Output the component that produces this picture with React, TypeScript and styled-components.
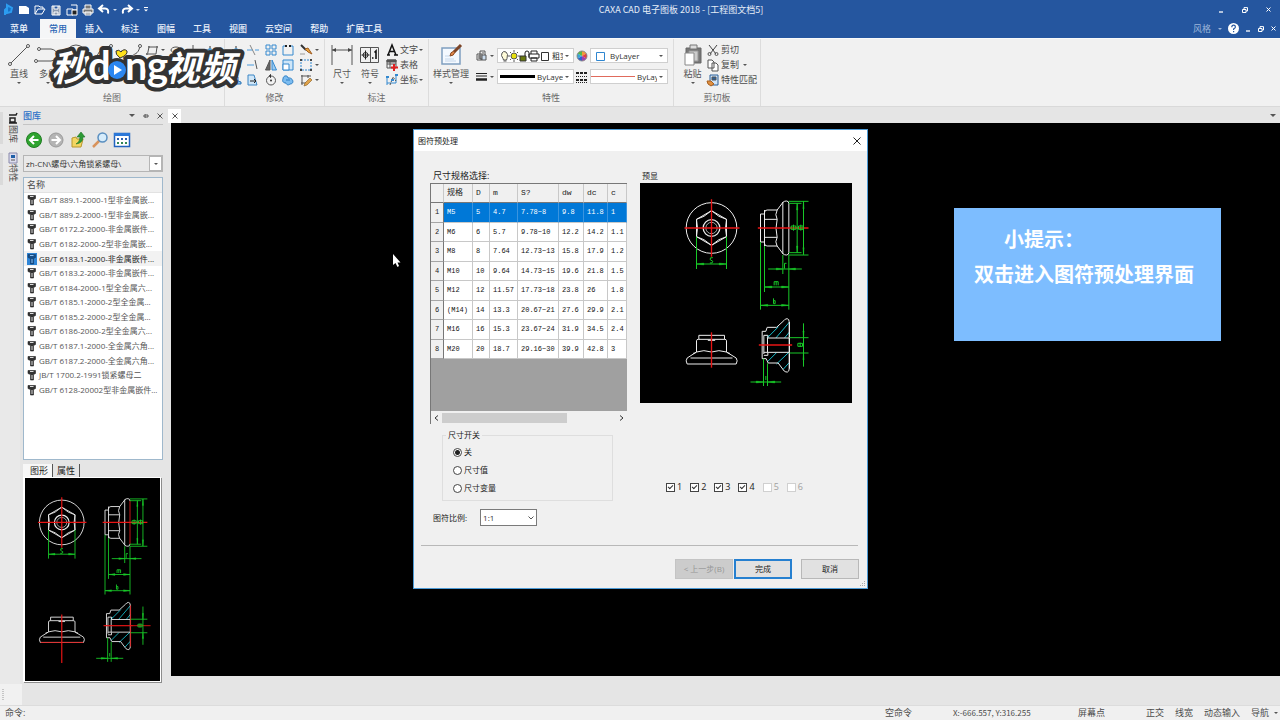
import React from "react";
import styled, { createGlobalStyle, css } from "styled-components";

const BLUE = "#25569f";
const INK = "#4c4c4c";
const UI_FONT = `"Open Sans", "Noto Sans CJK SC", sans-serif`;
const NARROW_FONT = `"Noto Sans CJK SC", sans-serif`;

const GlobalStyle = createGlobalStyle`
  *, *::before, *::after { box-sizing: border-box; }
  body { margin: 0; background: #e5e5e5; }
  body, button, input, select { font-family: ${UI_FONT}; font-size: 9px; line-height: 12px; color: ${INK}; }
  button { border: 0; padding: 0; background: none; white-space: nowrap; }
  svg { display: block; flex: none; overflow: visible; }
`;

const Page = styled.div`
  position: relative;
  display: flex;
  flex-direction: column;
  min-height: 100vh;
  overflow: hidden;
`;

/* ---------- title bar and menu ---------- */

const Banner = styled.header`
  background: ${BLUE};
  color: #fff;
  height: 38px;
`;

const TitleBar = styled.div`
  display: grid;
  grid-template-columns: 1fr auto 1fr;
  align-items: center;
  height: 19px;
`;

const QuickAccess = styled.div`
  display: flex;
  align-items: center;
  gap: 4px;
  padding-left: 2px;
  height: 15px;
`;

const Title = styled.h1`
  margin: 0;
  font-family: ${NARROW_FONT};
  font-size: 9px;
  font-weight: 400;
  line-height: 19px;
  color: #e6edf7;
  padding-left: 82px;
`;

const WindowButtons = styled.div<{ $gap: number }>`
  display: flex;
  align-items: center;
  justify-content: flex-end;
  gap: ${(p) => p.$gap}px;
  padding-right: ${(p) => (p.$gap > 10 ? 9 : 4)}px;
`;

const PlainButton = styled.button`
  display: flex;
  align-items: center;
  justify-content: center;
  gap: 3px;
  color: inherit;
`;

const MenuBar = styled.nav`
  display: flex;
  align-items: stretch;
  height: 19px;
  padding-left: 1px;
`;

const MenuTab = styled.button<{ $active?: boolean }>`
  padding: 0 9px;
  color: #e9f0fa;
  font-weight: 500;
  ${(p) =>
    p.$active &&
    css`
      margin-left: 3px;
      background: #f5f6f7;
      color: #2a66b5;
    `}
`;

const MenuRight = styled.div`
  display: flex;
  align-items: center;
  gap: 6px;
  margin-left: auto;
  color: #9db6da;
`;

/* ---------- ribbon ---------- */

const Ribbon = styled.section`
  display: flex;
  height: 69px;
  background: #f1f1f1;
  border-top: 1px solid #fafafa;
  border-bottom: 1px solid #d9d9d9;
`;

const Group = styled.div<{ $width: number }>`
  display: flex;
  flex-direction: column;
  flex: none;
  width: ${(p) => p.$width}px;
  padding-top: 3px;
  border-right: 1px solid #dcdcdc;
`;

const GroupBody = styled.div<{ $left: number }>`
  display: flex;
  height: 50px;
  padding-left: ${(p) => p.$left}px;
`;

const GroupLabel = styled.div`
  text-align: center;
  color: #6a6a6a;
`;

const BigButton = styled.button<{ $width: number }>`
  display: flex;
  flex-direction: column;
  align-items: center;
  width: ${(p) => p.$width}px;
  padding-top: 2px;
  gap: 2px;
  color: #555;
`;

const BigLabel = styled.span`
  height: 12px;
`;

const SmallGrid = styled.div<{ $columns: string }>`
  display: grid;
  grid-template-columns: ${(p) => p.$columns};
  grid-template-rows: repeat(3, 15px);
  align-items: center;
  justify-items: start;
`;

const TextTool = styled.button`
  display: flex;
  align-items: center;
  gap: 2px;
  height: 15px;
`;

const PropertyGrid = styled.div`
  display: grid;
  grid-template-columns: 25px 77px 16px 78px;
  grid-template-rows: 15px 15px;
  row-gap: 6px;
  align-items: center;
  justify-items: center;
  padding-top: 6px;
  height: 42px;
`;

const Combo = styled.label`
  display: flex;
  align-items: center;
  gap: 2px;
  width: 100%;
  height: 15px;
  padding: 0 4px 0 2px;
  overflow: hidden;
  background: #fff;
  border: 1px solid #cfcfcf;
`;

const ComboSelect = styled.select`
  flex: 1;
  min-width: 0;
  height: 13px;
  padding: 0;
  border: 0;
  appearance: none;
  background: none;
  color: #333;
  font-size: 8px;
  line-height: 13px;
`;

/* ---------- work area ---------- */

const Work = styled.div`
  display: flex;
  flex: 1;
  min-height: 577px;
`;

const Rail = styled.div`
  display: flex;
  flex-direction: column;
  gap: 9px;
  width: 20px;
  padding-top: 5px;
  background: #e9e9e9;
`;

const RailTab = styled.button`
  display: flex;
  flex-direction: column;
  align-items: center;
  gap: 1px;
  height: 32px;
  padding-left: 3px;
  border-left: 3px solid #dadada;
`;

const RailText = styled.span`
  writing-mode: vertical-rl;
  text-orientation: sideways;
  line-height: 12px;
`;

const Panel = styled.aside`
  display: flex;
  flex-direction: column;
  width: 148px;
  padding: 0 5px 2px 3px;
`;

const PanelHeader = styled.div`
  display: flex;
  align-items: center;
  gap: 8px;
  height: 18px;
  border-bottom: 1px solid #c4c4c4;
  color: #2a70c8;
`;

const PanelName = styled.h2`
  flex: 1;
  margin: 0;
  font-size: 9px;
  font-weight: 500;
`;

const PanelTools = styled.div`
  display: flex;
  align-items: center;
  gap: 6px;
  height: 30px;
  padding-left: 3px;
`;

const PathCombo = styled(Combo)`
  height: 17px;
  padding: 0 0 0 2px;
  background: #e9e9e9;
  border: 1px solid #b5b5b5;
  flex: none;
`;

const DropBox = styled.span`
  display: flex;
  align-items: center;
  justify-content: center;
  width: 13px;
  height: 15px;
  background: #fff;
  border: 1px solid #b5b5b5;
`;

const ListBox = styled.div`
  flex: 1;
  margin-top: 5px;
  background: #fff;
  border: 1px solid #9fb8cc;
`;

const ListHead = styled.div`
  height: 15px;
  padding-left: 3px;
  line-height: 14px;
  background: #f0f0f0;
  border-bottom: 1px solid #e2e2e2;
`;

const PartList = styled.ul`
  display: grid;
  grid-auto-rows: 1fr;
  height: 204px;
  margin: 0;
  padding: 0;
  list-style: none;
  font-size: 8px;
`;

const PartItem = styled.li<{ $selected: boolean }>`
  display: flex;
  align-items: center;
  gap: 2px;
  padding-left: 3px;
  white-space: nowrap;
  background: ${(p) => (p.$selected ? "#f2f2f2" : "transparent")};
  color: ${(p) => (p.$selected ? "#222" : "#555")};
`;

const PreviewTabs = styled.div`
  display: flex;
  margin-top: 4px;
`;

const PreviewTab = styled.button<{ $active?: boolean }>`
  height: 13px;
  padding: 0 4px 0 ${(p) => (p.$active ? 7 : 4)}px;
  color: #222;
  border-right: 1px solid #555;
  background: ${(p) => (p.$active ? "#f7f7f7" : "transparent")};
`;

const SidePreview = styled.div`
  height: 205px;
  margin-right: 2px;
  background: #000;
  border: 1px solid #fff;
  border-left-width: 2px;
  box-shadow: 1px 1px 0 #8c8c8c;
`;

const Main = styled.main`
  display: flex;
  flex-direction: column;
  flex: 1;
  min-width: 0;
  padding-bottom: 8px;
`;

const DocTabs = styled.div`
  display: flex;
  align-items: center;
  justify-content: space-between;
  height: 16px;
  padding-right: 4px;
`;

const DocTab = styled(PlainButton)`
  width: 13px;
  height: 14px;
  background: #fff;
  align-self: flex-end;
  color: #555;
`;

const Canvas = styled.div`
  position: relative;
  flex: 1;
  margin-left: 3px;
  background: #000;
`;

const Tip = styled.div`
  position: absolute;
  top: 85px;
  right: 59px;
  width: 267px;
  height: 133px;
  padding: 14px 20px;
  background: #7dbdff;
  color: #fff;
  font-size: 20px;
  font-weight: 700;
  line-height: 35px;
  white-space: nowrap;
`;

const TipHead = styled.p`
  margin: 0;
  padding-left: 30px;
`;

const TipText = styled.p`
  margin: 0;
`;

const Pointer = styled.svg`
  position: absolute;
  left: 221px;
  top: 131px;
`;

const CommandRow = styled.div`
  height: 22px;
  border-bottom: 1px solid #dcdcdc;
`;

const CommandGrip = styled.div`
  display: flex;
  align-items: center;
  width: 22px;
  height: 21px;
  padding-left: 2px;
  background: #f1f1f1;
`;

const StatusBar = styled.footer`
  display: flex;
  align-items: center;
  height: 14px;
  padding: 0 2px 0 5px;
  background: #f0f0f0;
  white-space: nowrap;
`;

const StatusCell = styled.span<{ $width?: number; $small?: boolean }>`
  flex: none;
  width: ${(p) => (p.$width ? `${p.$width}px` : "auto")};
  margin-left: ${(p) => (p.$width ? "0" : "auto")};
  ${(p) =>
    p.$small &&
    css`
      font-family: ${NARROW_FONT};
      font-size: 8px;
    `}
`;

const Watermark = styled.svg`
  position: absolute;
  left: 44px;
  top: 40px;
`;

/* ---------- dialog ---------- */

const Dialog = styled.section`
  position: absolute;
  top: 129px;
  left: calc(50% - 227px);
  width: 455px;
  height: 460px;
  display: flex;
  flex-direction: column;
  background: #f0f0f0;
  border: 1px solid #4d9bd6;
  color: #222;
`;

const DialogTitle = styled.div`
  display: flex;
  align-items: center;
  justify-content: space-between;
  height: 21px;
  padding: 0 6px 0 4px;
  background: #fff;
`;

const DialogName = styled.h2`
  margin: 0;
  font-size: 8px;
  font-weight: 400;
`;

const DialogBody = styled.div`
  display: flex;
  gap: 13px;
  height: 395px;
  margin: 0 9px 0 7px;
  padding: 17px 6px 0 9px;
  border-bottom: 1px solid #b8b8b8;
`;

const LeftColumn = styled.div`
  width: 197px;
`;

const RightColumn = styled.div`
  flex: 1;
`;

const Caption = styled.div`
  height: 15px;
  padding-left: 3px;
  line-height: 15px;
`;

const SmallCaption = styled(Caption)`
  padding-left: 2px;
  font-size: 8px;
`;

const GridBox = styled.div`
  height: 241px;
  display: flex;
  flex-direction: column;
  background: #a0a0a0;
  border-top: 1px solid #777;
  border-left: 1px solid #777;
`;

const SizeTable = styled.table`
  width: 196px;
  height: 175px;
  table-layout: fixed;
  border-collapse: separate;
  border-spacing: 0;
  font-family: "Liberation Mono", "Noto Sans CJK SC", monospace;
  font-size: 7px;
  line-height: 12px;
`;

const cell = css`
  height: 19px;
  padding: 0 0 0 3px;
  text-align: left;
  font-weight: 400;
  white-space: nowrap;
  overflow: hidden;
`;

const HeadCell = styled.th`
  ${cell}
  background: #f0f0f0;
  font-size: 8px;
  border-right: 1px solid #c8c8c8;
  border-bottom: 1px solid #777;
`;

const RowNumber = styled.th`
  ${cell}
  padding-left: 4px;
  background: #f0f0f0;
  border-right: 1px solid #777;
  border-bottom: 1px solid #a5a5a5;
`;

const DataCell = styled.td<{ $selected: boolean }>`
  ${cell}
  background: ${(p) => (p.$selected ? "#0078d7" : "#fff")};
  color: ${(p) => (p.$selected ? "#fff" : "#111")};
  border-right: 1px solid ${(p) => (p.$selected ? "#3a94df" : "#c8c8c8")};
  border-bottom: 1px solid #c8c8c8;
`;

const ScrollBar = styled.div`
  display: flex;
  align-items: center;
  justify-content: space-between;
  height: 13px;
  margin-top: auto;
  padding: 0 2px;
  background: #f0f0f0;
`;

const Thumb = styled.div`
  width: 125px;
  height: 10px;
  margin-right: auto;
  margin-left: 3px;
  background: #cdcdcd;
`;

const SwitchBox = styled.fieldset`
  display: flex;
  flex-direction: column;
  gap: 6px;
  width: 171px;
  height: 72px;
  margin: 5px 0 0 12px;
  padding: 5px 0 0 10px;
  border: 1px solid #dedede;
`;

const SwitchLegend = styled.legend`
  margin-left: -7px;
  padding: 0 2px;
  font-size: 8px;
`;

const Choice = styled.label<{ $dim?: boolean }>`
  display: flex;
  align-items: center;
  gap: 2px;
  height: 12px;
  font-size: ${(p) => (p.$dim === undefined ? 8 : 9)}px;
  color: ${(p) => (p.$dim ? "#a0a0a0" : "#222")};
`;

const Radio = styled.input`
  appearance: none;
  width: 9px;
  height: 9px;
  margin: 0;
  border: 1px solid #444;
  border-radius: 50%;
  background: #fff;
  &:checked {
    background: radial-gradient(circle, #222 0 2px, #fff 3px);
  }
`;

const CheckBoxes = styled.div`
  display: flex;
  gap: 8px;
  margin: 78px 0 0 26px;
`;

const CheckBox = styled.input`
  appearance: none;
  width: 9px;
  height: 9px;
  margin: 0;
  border: 1px solid #444;
  background: #fff;
  &:disabled {
    border-color: #d0d0d0;
  }
  &:checked::after {
    content: "";
    display: block;
    width: 5px;
    height: 3px;
    margin: 1px;
    border-left: 1px solid #333;
    border-bottom: 1px solid #333;
    transform: rotate(-45deg);
  }
`;

const ScaleRow = styled.label`
  display: flex;
  align-items: center;
  gap: 13px;
  margin-top: 8px;
  padding-left: 3px;
  font-size: 8px;
`;

const ScaleCombo = styled.span`
  display: flex;
  align-items: center;
  width: 57px;
  height: 17px;
  padding: 0 2px;
  background: #fff;
  border: 1px solid #7a7a7a;
`;

const DialogPreview = styled.div`
  height: 220px;
  background: #000;
`;

const DialogButtons = styled.div`
  display: flex;
  justify-content: flex-end;
  padding: 13px 8px 0 0;
`;

const DialogButton = styled.button<{ $primary?: boolean }>`
  width: 58px;
  height: 20px;
  margin-left: ${(p) => (p.$primary ? 1 : 9)}px;
  border: ${(p) => (p.$primary ? "2px solid #2680d0" : "1px solid #b8b8b8")};
  background: #e1e1e1;
  color: #222;
  font-size: 8px;
  &:disabled {
    background: #cccccc;
    color: #969696;
    border-color: #c4c4c4;
  }
`;

const SizeGrip = styled.svg`
  position: absolute;
  right: 1px;
  bottom: 1px;
`;

/* ---------- icons ---------- */

const Icon = ({ size = 12, height, box, children }: { size?: number; height?: number; box?: string; children: React.ReactNode }) => (
  <svg width={size} height={height ?? size} viewBox={box ?? `0 0 ${size} ${height ?? size}`} fill="none" stroke="#555" aria-hidden="true">
    {children}
  </svg>
);

const Down = ({ color = "#555", size = 4 }: { color?: string; size?: number }) => (
  <Icon size={size} height={Math.ceil(size / 2)} box="0 0 4 2">
    <path d="M0 0h4L2 2z" fill={color} stroke="none" />
  </Icon>
);

const CrossMark = ({ size = 6, color = "currentColor" }: { size?: number; color?: string }) => (
  <Icon size={size} box={`0 0 ${size} ${size}`}>
    <path d={`M.5 .5L${size - 0.5} ${size - 0.5}M${size - 0.5} .5L.5 ${size - 0.5}`} stroke={color} />
  </Icon>
);

const WindowIcons = () => (
  <>
    <PlainButton aria-label="最小化"><Icon size={6}><path d="M1 5h4" stroke="#fff" strokeWidth="1.300" /></Icon></PlainButton>
    <PlainButton aria-label="还原">
      <Icon size={6}><path d="M.5 2.500h3.500v3h-3.500zM2 2V.6h3.500V4H4" stroke="#fff" /></Icon>
    </PlainButton>
    <PlainButton aria-label="关闭"><CrossMark size={5} color="#fff" /></PlainButton>
  </>
);

const toolIcons: Record<string, React.ReactNode> = {
  rect: <><path d="M3 3h8l-1 7H1.500z" /><path d="M2 2h2v2H2zM10 2h2v2h-2zM0 9h2v2H0z" fill="#777" stroke="none" /></>,
  ellipse: <ellipse cx="6" cy="6" rx="5" ry="3" />,
  point: <path d="M6 1v10M1 6h10" />,
  dot: <><path d="M6 2v8M2 6h8" stroke="#333" /><circle cx="6" cy="6" r="2" fill="#4c9ad6" stroke="none" /></>,
  hatch: <path d="M1 1h10v10H1zM1 6l5-5M1 11L11 1M6 11l5-5" />,
  wave: <path d="M1 8c3-9 5 7 10-3" stroke="#2684cc" />,
  blob: <><path d="M1 10h10v-2l-3-1V3L5 2 3 7 1 8z" fill="#8cc4ee" stroke="#2a74b5" /></>,
  trim: <><path d="M0 6h6M8 6h4" stroke="#4a9bdc" /><path d="M3 1l5 10" stroke="#888" /></>,
  extend: <><path d="M0 6h7" stroke="#4a9bdc" /><path d="M8 1l2 9" stroke="#555" /></>,
  stretch: <><path d="M1 1h6l3 10H1z" stroke="#3c86c4" fill="#cfe6f8" /><path d="M3 7h6M7 5l2 2-2 2" stroke="#222" /></>,
  array: <path d="M1 1h4v4H1zM7 1h4v4H7zM1 7h4v4H1zM7 7h4v4H7z" stroke="#3489cf" />,
  mirror: <><path d="M5 1v10H.5z" fill="#666" stroke="#555" /><path d="M7 1v10h4.500z" fill="#9ccbf0" stroke="#3489cf" /></>,
  rotate: <><circle cx="6" cy="6.500" r="4.500" /><circle cx="6" cy="6.500" r="1" fill="#333" stroke="none" /><path d="M6 0l-2 2 2 2" fill="#333" /></>,
  breakAt: <><path d="M4 2H1v9h10V2H8" stroke="#3489cf" /><path d="M3 2h2M7 2h2" stroke="#222" strokeWidth="2" /></>,
  scale: <><path d="M1 1h10v10H1z" fill="#cfe6f8" stroke="#3489cf" /><path d="M1 5h6v6H1z" fill="#fff" stroke="#3489cf" /></>,
  cloud: <><path d="M1 5c0-4 5-4 5-1 5-1 7 6 2 6-2 2-4 0-4-1-3 0-4-2-3-4z" fill="#7cbcf0" stroke="#2d7fc4" /><path d="M4 6h4" stroke="#2d7fc4" /></>,
  brush: <><path d="M1 1l5 5" stroke="#333" strokeWidth="2" /><path d="M5 5l3-1 4 6-4-2z" fill="#e8a33c" stroke="#a05c20" /><path d="M0 10h5" stroke="#999" /></>,
  select: <><path d="M1 1h10v10H1z" stroke="#2f86d0" strokeDasharray="2 1" /><path d="M0 0h2v2H0zM10 0h2v2h-2zM0 10h2v2H0zM10 10h2v2h-2z" fill="#444" stroke="none" /></>,
  edit: <><path d="M1 2h10M2 1v10M1 9h5M8 1v3" stroke="#555" /><path d="M5 9l5-5 2 2-5 5-3 1z" fill="#e0a34a" stroke="#875a1e" strokeWidth=".6" /></>,
};

const Tool = ({ name, label }: { name: string; label: string }) => (
  <PlainButton aria-label={label}><Icon>{toolIcons[name]}</Icon></PlainButton>
);

const More = () => <PlainButton aria-label="更多"><Down /></PlainButton>;

const BoltIcon = ({ selected }: { selected: boolean }) => (
  <Icon size={10} height={12}>
    {selected && <path d="M0 0h10v12H0z" fill="#2f86d8" stroke="none" />}
    <path d="M1 1.500h7.500v3L6.500 5.500v5.500h-3V5.500L1 4.500z" fill={selected ? "#174d86" : "#333"} stroke={selected ? "#123c6c" : "#222"} strokeWidth=".6" />
    <path d="M3 2.500h3.500M5 6v4" stroke={selected ? "#8dc3f5" : "#ddd"} />
  </Icon>
);

/* Orthographic views of a hexagon flange nut with its dimension lines. */
const NutDrawing = ({ width, height, box, markEdges }: { width: string; height: string; box: string; markEdges?: boolean }) => {
  const edge = markEdges ? "#e01818" : "#eee";
  return (
    <svg width={width} height={height} viewBox={box} fill="none" strokeWidth="3" role="img" aria-label="六角锁紧螺母">
      <g stroke="#eee">
        <circle cx="229" cy="190" r="76" />
        <path d="M229 138l45 26v52l-45 26-45-26v-52z" />
        <path d="M184 164q22-5 45-26 22 21 45 26M184 216q22 5 45 26 22-21 45-26M184 164q6 26 0 52M274 164q-6 26 0 52" />
        <circle cx="229" cy="190" r="25" strokeWidth="4" />
        <circle cx="229" cy="190" r="17" stroke="#aaa" />
      </g>
      <path d="M148 190h165M229 104v172" stroke="#e81414" strokeWidth="4" />
      <g stroke="#eee">
        <path d="M388 148h-12v84h12M388 136v108M388 144q0-8 8-8h30M388 236q0 8 8 8h30M388 164h38M388 218h38M426 136q-8 14 0 28-7 27 0 54-8 13 0 27M426 136l18-24q4-3 10-3 7 0 7 8M426 244l18 24q4 3 10 3 7 0 7-8M443 112v156" />
        <path d="M461 117v146" stroke={edge} />
      </g>
      <path d="M368 190h152" stroke="#e81414" strokeWidth="4" />
      <g stroke="#18c828">
        <path d="M184 216v97M274 216v97M184 298h90M233 279q-10-2-8 6l8 5q0 7-9 5" />
        <path d="M461 110h59M461 271h59M505 110v160M461 116h38M461 264h38M486 116v148M468 184h14v10h-14zM490 184h14v10h-14zM475 180v18M497 180v18" />
        <path d="M443 271v57M461 271v164M399 313h101M454 296h-6v16M388 244v138M388 367h73M417 362v-11h12v11M423 351v11M376 232v203M376 422h85M415 401v16h5v-9h-5" />
        <path d="M184 298l22-3v6zM274 298l-22-3v6zM388 367l22-3v6zM461 367l-22-3v6zM376 422l22-3v6zM461 422l-22-3v6zM505 110l-2 22h4zM505 271l-2-22h4zM486 116l-2 20h4zM486 264l-2-20h4zM443 313l-20-3v6zM461 313l20-3v6z" fill="#18c828" strokeWidth="1" />
      </g>
      <g stroke="#eee">
        <path d="M191 524v-12h77v12M184 562v-34q0-4 6-4h78q6 0 6 4v34M184 562q22-8 45 0 22-8 45 0M184 562l-28 18q-6 8 0 18h147q6-10 0-18l-29-18M166 580h126M184 562q-4 4-10 4M274 562q4 4 10 4M218 527h22" />
        {markEdges && <path d="M157 598h145" stroke="#e01818" />}
      </g>
      <path d={markEdges ? "M229 503v165" : "M229 503v106"} stroke="#e81414" strokeWidth="4" />
      <g stroke="#16bccb">
        <path d="M396 520l34-34M422 520l41-48M448 520l15-18M402 512l-6 6M396 592l28-28M424 598l38-36M444 614l18-20" />
      </g>
      <g stroke="#eee">
        <path d="M381 500v82h12l6 13h30l18 24q5 4 10 3 5-2 5-9v-142q0-8-6-9-6 0-10 6l-22 20h-28l-4 12zM386 512v56M397 520h66M386 563h77M397 520v43M386 512h12v8M386 572h12v-8" />
        <path d="M463 472v140" stroke={edge} />
      </g>
      <path d="M371 541h100" stroke="#e81414" strokeWidth="4" />
      {markEdges && <path d="M471 541h60" stroke="#e81414" />}
      <g stroke="#18c828">
        <path d="M463 519h57M463 565h57M505 476v130M488 536h14v9h-14zM495 534v13M385 582v82M397 596v68M346 652h92M392 634v12" />
        <path d="M505 519l-2-20h4zM505 565l-2 20h4zM385 652l-22-3v6zM397 652l22-3v6z" fill="#18c828" strokeWidth="1" />
      </g>
    </svg>
  );
};

/* ---------- data ---------- */

const menus = ["菜单", "常用", "插入", "标注", "图幅", "工具", "视图", "云空间", "帮助", "扩展工具"];

const parts = [
  "GB/T 889.1-2000-1型非金属嵌...",
  "GB/T 889.2-2000-1型非金属嵌...",
  "GB/T 6172.2-2000-非金属嵌件...",
  "GB/T 6182-2000-2型非金属嵌...",
  "GB/T 6183.1-2000-非金属嵌件...",
  "GB/T 6183.2-2000-非金属嵌件...",
  "GB/T 6184-2000-1型全金属六...",
  "GB/T 6185.1-2000-2型全金属...",
  "GB/T 6185.2-2000-2型全金属...",
  "GB/T 6186-2000-2型全金属六...",
  "GB/T 6187.1-2000-全金属六角...",
  "GB/T 6187.2-2000-全金属六角...",
  "JB/T 1700.2-1991锁紧螺母二",
  "GB/T 6128-20002型非金属嵌件...",
];

const columns = ["规格", "D", "m", "S?", "dw", "dc", "c"];
const columnWidths = [13, 29, 17, 28, 41, 25, 24, 19];

const sizes = [
  ["M5", "5", "4.7", "7.78~8", "9.8", "11.8", "1"],
  ["M6", "6", "5.7", "9.78~10", "12.2", "14.2", "1.1"],
  ["M8", "8", "7.64", "12.73~13", "15.8", "17.9", "1.2"],
  ["M10", "10", "9.64", "14.73~15", "19.6", "21.8", "1.5"],
  ["M12", "12", "11.57", "17.73~18", "23.8", "26", "1.8"],
  ["(M14)", "14", "13.3", "20.67~21", "27.6", "29.9", "2.1"],
  ["M16", "16", "15.3", "23.67~24", "31.9", "34.5", "2.4"],
  ["M20", "20", "18.7", "29.16~30", "39.9", "42.8", "3"],
];

/* ---------- sections ---------- */

const TopBanner = () => (
  <Banner>
    <TitleBar>
      <QuickAccess>
        <Icon size={12}><path d="M3 11V6l3-3M5 1l5 3-1 4-4 1z" stroke="#2c9cf0" strokeWidth="2" fill="#1670c8" /></Icon>
        <PlainButton aria-label="新建"><Icon size={12}><path d="M1 2h7l3 2v6H1z" fill="#fff" stroke="none" /></Icon></PlainButton>
        <PlainButton aria-label="打开"><Icon size={12}><path d="M1 10V2h4l1 1h3v2M1 10l3-5h7l-3 5z" stroke="#fff" /></Icon></PlainButton>
        <PlainButton aria-label="保存"><Icon size={12}><path d="M2 2h8v9H2zM4 2v3h4V2M4 11V8h4v3" stroke="#fff" fill="#8e9cb0" /></Icon></PlainButton>
        <PlainButton aria-label="全部保存"><Icon size={12}><path d="M1 5h6v6H1zM5 1h6v5H7" stroke="#fff" /><path d="M6 6h5v5H6z" fill="#222" stroke="#fff" /></Icon></PlainButton>
        <PlainButton aria-label="打印"><Icon size={12}><path d="M3 5V1h6v4M1 5h10v4H1zM3 8h6v3H3z" stroke="#fff" fill="#777" /></Icon></PlainButton>
        <PlainButton aria-label="撤销"><Icon size={12}><path d="M5 1L1 4.500 5 8M2 4.500h5q4 0 3 5" stroke="#fff" strokeWidth="2" /></Icon><Down color="#cfdcf0" /></PlainButton>
        <PlainButton aria-label="重做"><Icon size={12}><path d="M7 1l4 3.500L7 8M10 4.500H5q-4 0-3 5" stroke="#fff" strokeWidth="2" /></Icon><Down color="#cfdcf0" /></PlainButton>
        <PlainButton aria-label="自定义"><Icon size={4} height={5}><path d="M0 .5h4" stroke="#fff" /><path d="M0 2.500h4l-2 2z" fill="#fff" stroke="none" /></Icon></PlainButton>
      </QuickAccess>
      <Title>CAXA CAD 电子图板 2018 - [工程图文档5]</Title>
      <WindowButtons $gap={18}><WindowIcons /></WindowButtons>
    </TitleBar>
    <MenuBar>
      {menus.map((m) => <MenuTab key={m} $active={m === "常用"}>{m}</MenuTab>)}
      <MenuRight>
        <PlainButton>风格<Icon size={8} height={2}><path d="M4 0h4l-2 2z" fill="#9db6da" stroke="none" /></Icon></PlainButton>
        <PlainButton aria-label="帮助主题">
          <Icon size={11}><circle cx="5.500" cy="5.500" r="5.500" fill="#fff" stroke="none" /><path d="M3.800 4.200q0-2 1.800-2 1.800 0 1.800 1.700 0 1-1.800 2v1M5.600 8v1.200" stroke={BLUE} strokeWidth="1.200" /></Icon>
        </PlainButton>
        <WindowButtons $gap={7}><WindowIcons /></WindowButtons>
      </MenuRight>
    </MenuBar>
  </Banner>
);

const Big = ({ label, name, width, children }: { label?: string; name?: string; width: number; children: React.ReactNode }) => (
  <BigButton $width={width} aria-label={name}>
    <Icon size={22}>{children}</Icon>
    <BigLabel>{label}</BigLabel>
    <Down />
  </BigButton>
);

const TopRibbon = () => (
  <Ribbon>
    <Group $width={225}>
      <GroupBody $left={4}>
        <Big label="直线" width={30}><path d="M2 20L20 2" /><circle cx="2" cy="20" r="1.500" fill="#fff" /><circle cx="20" cy="2" r="1.500" fill="#fff" /></Big>
        <Big label="多段" name="多段线" width={28}><path d="M0 17h14q6-1 6-6t-6-6H3" /><circle cx="-1" cy="17" r="1.500" fill="#fff" /><circle cx="2" cy="5" r="1.500" fill="#fff" /></Big>
        <Big name="圆" width={28}><circle cx="11" cy="11" r="10" /></Big>
        <Big name="圆弧" width={28}><path d="M2 20Q3 4 18 2" /><circle cx="18" cy="2" r="1.500" fill="#fff" /></Big>
        <Big name="样条" width={28}><path d="M1 6c2 14 6 14 9 8s7-2 9-12" /><circle cx="19" cy="2" r="1.500" fill="#fff" /></Big>
        <SmallGrid $columns="15px 9px 17px 17px 20px">
          <Tool name="rect" label="矩形" /><More /><Tool name="ellipse" label="椭圆" /><Tool name="point" label="中心线" /><Tool name="dot" label="点" />
          <Tool name="wave" label="波浪线" /><More /><Tool name="rotate" label="圆形" /><Tool name="hatch" label="填充" /><Tool name="dot" label="等分点" />
          <Tool name="point" label="轴" /><More /><Tool name="hatch" label="剖面线" /><Tool name="ellipse" label="孔" /><Tool name="cloud" label="齿形" />
        </SmallGrid>
      </GroupBody>
      <GroupLabel>绘图</GroupLabel>
    </Group>
    <Group $width={100}>
      <GroupBody $left={5}>
        <SmallGrid $columns="17px 18px 17px 18px 15px 8px">
          <Tool name="dot" label="移动" /><Tool name="trim" label="裁剪" /><Tool name="array" label="阵列" /><Tool name="breakAt" label="打断" /><Tool name="brush" label="删除" /><More />
          <Tool name="rotate" label="复制" /><Tool name="extend" label="延伸" /><Tool name="mirror" label="镜像" /><Tool name="scale" label="缩放" /><Tool name="select" label="选择" /><More />
          <Tool name="blob" label="偏移" /><Tool name="stretch" label="拉伸" /><Tool name="rotate" label="旋转" /><Tool name="cloud" label="分解" /><Tool name="edit" label="编辑" /><More />
        </SmallGrid>
      </GroupBody>
      <GroupLabel>修改</GroupLabel>
    </Group>
    <Group $width={104}>
      <GroupBody $left={3}>
        <Big label="尺寸" width={28}><path d="M1 1v20M21 1v20M1 6h20" /><path d="M1 6l4-2v4zM21 6l-4-2v4z" fill="#444" stroke="none" /></Big>
        <Big label="符号" width={28}>
          <path d="M1.500 3.500h18v15h-18zM11.500 3.500v15" /><circle cx="6.500" cy="11" r="2.500" stroke="#222" /><path d="M6.500 6.500v9M2.500 11h8" stroke="#222" /><path d="M13 14h1.500M15.500 8.500L17 7v8" stroke="#111" strokeWidth="1.600" />
        </Big>
        <SmallGrid $columns="35px 8px">
          <TextTool><Icon size={14} height={12}><path d="M4 11L8 1l4 10M5.500 7.500h5M3 11h3M10 11h4" stroke="#111" strokeWidth="1.500" /></Icon>文字</TextTool><More />
          <TextTool><Icon size={14} height={12}><path d="M3 1h9v8H3zM3 5h9M6 3v6" /><path d="M3 1h9v2H3z" fill="#555" /><path d="M10 5v7M7 8.500h7" stroke="#e02020" strokeWidth="2" /></Icon>表格</TextTool><span />
          <TextTool><Icon size={14} height={12}><path d="M3 11V4M3 9h9V2" stroke="#3489cf" /><path d="M6 11l3-8 3 4" strokeDasharray="2 1" /><path d="M2 3h3M11 1h3M7 6h3" stroke="#3489cf" strokeWidth="2" /></Icon>坐标</TextTool><More />
        </SmallGrid>
      </GroupBody>
      <GroupLabel>标注</GroupLabel>
    </Group>
    <Group $width={245}>
      <GroupBody $left={1}>
        <Big label="样式管理" width={42}>
          <path d="M2 4h18v16H2z" fill="#f4f9ff" stroke="#7f9fc0" strokeWidth="1.500" /><path d="M5 15h9M5 12h5M5 17h11" stroke="#c4d6ea" /><path d="M21 1l-7 7" stroke="#7d4426" strokeWidth="3" /><path d="M14 7q-4 1-4 5 4 0 5-4z" fill="#e38a4c" stroke="#8a4a26" />
        </Big>
        <PropertyGrid>
          <PlainButton aria-label="图层"><Icon size={11}><path d="M4 1h5v8H4zM1 4h5v6H1zM2 6h3M2 8h3M6 3h2" /><path d="M6 5h4v5H6z" fill="#cde" /></Icon><Down /></PlainButton>
          <Combo aria-label="图层">
            <Icon size={50} height={12}>
              <path d="M3 8.500Q.5 5.500 2 3t4-1 1 6.500L6.500 10h-3z" fill="#fffbd8" stroke="#555" /><path d="M3.500 11h3" />
              <circle cx="14" cy="6" r="3" fill="#e6e010" stroke="#555" /><path d="M14 0v2M14 10v2M8 6h2M18 6h2M10 2l1 1M18 2l-1 1M10 10l1-1M18 10l-1-1" stroke="#555" />
              <path d="M20 6h6v5h-6z" fill="#6a7a10" stroke="#333" /><path d="M25 6V3q0-2 2-2t2 2v4" stroke="#222" />
              <path d="M31 4V1h6v3M29 4h10v4H29zM31 8h6v3h-6z" stroke="#222" />
              <path d="M41.500 2.500h7v8h-7z" fill="#fff" stroke="#333" />
            </Icon>
            <ComboSelect><option>粗实</option></ComboSelect>
            <Down />
          </Combo>
          <PlainButton aria-label="颜色">
            <Icon size={12}>
              <g stroke="none"><path d="M6 6V1a5 5 0 0 1 4.300 2.500z" fill="#f29c38" /><path d="M6 6l4.300-2.500a5 5 0 0 1 0 5z" fill="#e04040" /><path d="M6 6l4.300 2.500A5 5 0 0 1 6 11z" fill="#a040b0" /><path d="M6 6v5a5 5 0 0 1-4.300-2.500z" fill="#3060d0" /><path d="M6 6L1.700 8.500a5 5 0 0 1 0-5z" fill="#38a8d8" /><path d="M6 6L1.700 3.500A5 5 0 0 1 6 1z" fill="#58b848" /></g>
              <circle cx="6" cy="6" r="5" stroke="#777" strokeWidth=".8" />
            </Icon>
          </PlainButton>
          <Combo aria-label="颜色">
            <Icon size={15} height={10}><path d="M3.500 1.500h8v8h-8z" fill="#fff" stroke="#2f86d0" /></Icon>
            <ComboSelect><option>ByLayer</option></ComboSelect>
            <Down />
          </Combo>
          <PlainButton aria-label="线宽"><Icon size={11} height={8}><path d="M0 .5h11M0 3h11" stroke="#222" /><path d="M0 6.500h11" stroke="#222" strokeWidth="2.500" /></Icon><Down /></PlainButton>
          <Combo aria-label="线宽">
            <Icon size={35} height={3}><path d="M0 1.500h35" stroke="#000" strokeWidth="3" /></Icon>
            <ComboSelect><option>ByLayer</option></ComboSelect>
            <Down />
          </Combo>
          <PlainButton aria-label="线型"><Icon size={12}><path d="M0 2h12M0 9h12" stroke="#222" strokeDasharray="3 1" strokeWidth="2" /><path d="M0 5.500h12M0 11.500h12" stroke="#222" strokeDasharray="1 1" /></Icon></PlainButton>
          <Combo aria-label="线型">
            <Icon size={42} height={3}><path d="M-2 1.500h44" stroke="#e06a5c" /></Icon>
            <ComboSelect><option>ByLay</option></ComboSelect>
            <Down />
          </Combo>
        </PropertyGrid>
      </GroupBody>
      <GroupLabel>特性</GroupLabel>
    </Group>
    <Group $width={87}>
      <GroupBody $left={4}>
        <Big label="粘贴" width={29}>
          <path d="M4 4h15v15H4z" fill="#777" stroke="#666" /><path d="M8 1h7v4H8z" fill="#ddd" stroke="#777" /><path d="M7 7h9v10H7z" fill="#ccc" stroke="#999" /><path d="M3 9h9v12H3z" fill="#fff" stroke="#888" />
        </Big>
        <SmallGrid $columns="52px">
          <TextTool><Icon><path d="M2 1l7 9M10 1L3 10" stroke="#444" /><circle cx="2.500" cy="10" r="1.500" /><circle cx="9.500" cy="10" r="1.500" /></Icon>剪切</TextTool>
          <TextTool><Icon><path d="M1 1h4l2 2v6H1zM5 4h4l2 2v6H5z" fill="#fff" /></Icon>复制<Icon size={7} height={2}><path d="M2 0h4L4 2z" fill="#555" stroke="none" /></Icon></TextTool>
          <TextTool><Icon><path d="M3 1h8v10H3z" fill="#cfe4f8" stroke="#2b5f98" /><path d="M5 3h4v3H5z" fill="#2b5f98" /><path d="M0 7l4 0 3 3-3 2-3-2z" fill="#e09040" stroke="#a86020" /></Icon>特性匹配</TextTool>
        </SmallGrid>
      </GroupBody>
      <GroupLabel>剪切板</GroupLabel>
    </Group>
  </Ribbon>
);

const LibraryPanel = () => (
  <Panel>
    <PanelHeader>
      <PanelName>图库</PanelName>
      <Down size={6} />
      <Icon size={6}><path d="M0 3h2M2 1v4M2 2h3v2H2" /></Icon>
      <CrossMark color="#555" />
    </PanelHeader>
    <PanelTools>
      <PlainButton aria-label="后退"><Icon size={16}><circle cx="8" cy="8" r="7.500" fill="#2fa42f" stroke="#1f7c22" /><path d="M12.500 8H5M8 4L4 8l4 4" stroke="#fff" strokeWidth="2" /></Icon></PlainButton>
      <PlainButton aria-label="前进"><Icon size={16}><circle cx="8" cy="8" r="7" fill="#b4b4b4" stroke="#9a9a9a" /><path d="M3.500 8H11M8 4l4 4-4 4" stroke="#fff" strokeWidth="2" /></Icon></PlainButton>
      <PlainButton aria-label="向上"><Icon size={16}><path d="M2 15V6l4-1 1 2h6l-2 8z" fill="#f3d662" stroke="#b8962c" /><path d="M6 12q4-2 4-7H7l4-5 4 5h-2q0 6-7 7z" fill="#2d9a35" stroke="#1d7426" strokeWidth=".6" /></Icon></PlainButton>
      <PlainButton aria-label="查找"><Icon size={16}><path d="M1 15l7-7" stroke="#d8935c" strokeWidth="2.500" /><circle cx="10.500" cy="5.500" r="4.500" fill="#d6ecfb" stroke="#5a8fc0" strokeWidth="1.500" /></Icon></PlainButton>
      <PlainButton aria-label="视图"><Icon size={16}><path d="M.5 1.500h15v13H.5z" fill="#fff" stroke="#2264c0" strokeWidth="1.500" /><path d="M0 1h16v3H0z" fill="#2c78d8" stroke="none" /><path d="M3 7h2M7 7h2M11 7h2" stroke="#2c60b0" strokeWidth="2" /><path d="M3 11h2M7 11h2M11 11h2" stroke="#385" strokeWidth="2" /></Icon></PlainButton>
    </PanelTools>
    <PathCombo aria-label="目录">
      <ComboSelect><option>zh-CN\螺母\六角锁紧螺母\</option></ComboSelect>
      <DropBox><Down /></DropBox>
    </PathCombo>
    <ListBox>
      <ListHead>名称</ListHead>
      <PartList>
        {parts.map((p, i) => (
          <PartItem key={p} $selected={i === 4}><BoltIcon selected={i === 4} />{p}</PartItem>
        ))}
      </PartList>
    </ListBox>
    <PreviewTabs>
      <PreviewTab $active>图形</PreviewTab>
      <PreviewTab>属性</PreviewTab>
    </PreviewTabs>
    <SidePreview><NutDrawing width="100%" height="100%" box="104 39 459 690" markEdges /></SidePreview>
  </Panel>
);

const SymbolDialog = () => (
  <Dialog role="dialog" aria-label="图符预处理">
    <DialogTitle>
      <DialogName>图符预处理</DialogName>
      <PlainButton aria-label="关闭对话框"><CrossMark size={8} color="#222" /></PlainButton>
    </DialogTitle>
    <DialogBody>
      <LeftColumn>
        <Caption>尺寸规格选择:</Caption>
        <GridBox>
          <SizeTable>
            <colgroup>{columnWidths.map((w, i) => <col key={i} width={w} />)}</colgroup>
            <thead>
              <tr><HeadCell />{columns.map((c) => <HeadCell key={c} scope="col">{c}</HeadCell>)}</tr>
            </thead>
            <tbody>
              {sizes.map((row, i) => (
                <tr key={row[0]}>
                  <RowNumber scope="row">{i + 1}</RowNumber>
                  {row.map((v, j) => <DataCell key={j} $selected={i === 0}>{v}</DataCell>)}
                </tr>
              ))}
            </tbody>
          </SizeTable>
          <ScrollBar>
            <Icon size={6}><path d="M5 .5L2 3l3 2.500" stroke="#333" /></Icon>
            <Thumb />
            <Icon size={6}><path d="M1 .5L4 3 1 5.500" stroke="#333" /></Icon>
          </ScrollBar>
        </GridBox>
        <SwitchBox>
          <SwitchLegend>尺寸开关</SwitchLegend>
          <Choice><Radio type="radio" name="dimension" defaultChecked />关</Choice>
          <Choice><Radio type="radio" name="dimension" />尺寸值</Choice>
          <Choice><Radio type="radio" name="dimension" />尺寸变量</Choice>
        </SwitchBox>
        <ScaleRow>
          图符比例:
          <ScaleCombo>
            <ComboSelect><option>1:1</option></ComboSelect>
            <Icon size={6} height={4}><path d="M.5 .5L3 3 5.500 .5" /></Icon>
          </ScaleCombo>
        </ScaleRow>
      </LeftColumn>
      <RightColumn>
        <SmallCaption>预显</SmallCaption>
        <DialogPreview><NutDrawing width="100%" height="100%" box="15 55 635 660" /></DialogPreview>
        <CheckBoxes>
          {[1, 2, 3, 4, 5, 6].map((n) => (
            <Choice key={n} $dim={n > 4}><CheckBox type="checkbox" defaultChecked={n < 5} disabled={n > 4} />{n}</Choice>
          ))}
        </CheckBoxes>
      </RightColumn>
    </DialogBody>
    <DialogButtons>
      <DialogButton disabled>&lt; 上一步(B)</DialogButton>
      <DialogButton $primary>完成</DialogButton>
      <DialogButton>取消</DialogButton>
    </DialogButtons>
    <SizeGrip width="6" height="6" aria-hidden="true"><path d="M4 0h1v1H4zM4 2h1v1H4zM2 2h1v1H2zM4 4h1v1H4zM2 4h1v1H2zM0 4h1v1H0z" fill="#aaa" /></SizeGrip>
  </Dialog>
);

const Brand = () => (
  <Watermark width="200" height="56" fontFamily={UI_FONT} fontWeight="700" aria-label="秒dong视频">
    <g fill="#fff" stroke="#333" strokeWidth="8" strokeLinejoin="round" paintOrder="stroke">
      <circle cx="73" cy="30" r="8" />
      <g fontStyle="italic">
        <text x="7" y="41" fontSize="36">秒</text>
        <text x="121" y="41" fontSize="35">视频</text>
      </g>
      <g fontFamily="Lato, sans-serif" fontSize="40">
        <text x="44" y="40">d</text>
        <text x="81" y="40">n</text>
        <text x="103" y="40">g</text>
      </g>
    </g>
    <circle cx="73" cy="30" r="9" fill="#2b86f0" />
    <path d="M70 25l8 5-8 5z" fill="#fff" />
    <path d="M76 18q-5-4-4-7 3-2 5 1 3-4 6-1 1 4-7 7z" fill="#ffe11a" stroke="#333" strokeWidth="1" />
  </Watermark>
);

export default function App() {
  return (
    <Page>
      <GlobalStyle />
      <TopBanner />
      <TopRibbon />
      <Work>
        <Rail>
          <RailTab><Icon size={10} height={12}><path d="M1 3h7l1-2M2 6h5v4H2zM1 11h8" stroke="#222" strokeWidth="1.500" /></Icon><RailText>图库</RailText></RailTab>
          <RailTab><Icon size={8} height={10}><path d="M0 0h8v10H0z" fill="#dde" stroke="#88a" /><path d="M2 2h4v3H2z" fill="#1f5fa8" stroke="none" /><path d="M2 7h4" /></Icon><RailText>特性</RailText></RailTab>
        </Rail>
        <LibraryPanel />
        <Main>
          <DocTabs>
            <DocTab aria-label="关闭文档"><CrossMark /></DocTab>
            <Down size={6} />
          </DocTabs>
          <Canvas>
            <Pointer width="9" height="13" viewBox="0 0 9 13" aria-hidden="true"><path d="M1 0v11l2.500-2L5.500 13l1.500-1-1.500-3.500H8.500z" fill="#fff" /></Pointer>
            <Tip>
              <TipHead>小提示：</TipHead>
              <TipText>双击进入图符预处理界面</TipText>
            </Tip>
          </Canvas>
        </Main>
      </Work>
      <CommandRow>
        <CommandGrip><Icon size={2} height={12}><path d="M1 0v12" stroke="#999" strokeDasharray="1 1" /></Icon></CommandGrip>
      </CommandRow>
      <StatusBar>
        <span>命令:</span>
        <StatusCell>空命令</StatusCell>
        <StatusCell $width={41} />
        <StatusCell $width={125} $small>X:-666.557, Y:316.255</StatusCell>
        <StatusCell $width={68}>屏幕点</StatusCell>
        <StatusCell $width={29}>正交</StatusCell>
        <StatusCell $width={29}>线宽</StatusCell>
        <StatusCell $width={47}>动态输入</StatusCell>
        <StatusCell $width={23}>导航</StatusCell>
        <Down />
      </StatusBar>
      <SymbolDialog />
      <Brand />
    </Page>
  );
}
